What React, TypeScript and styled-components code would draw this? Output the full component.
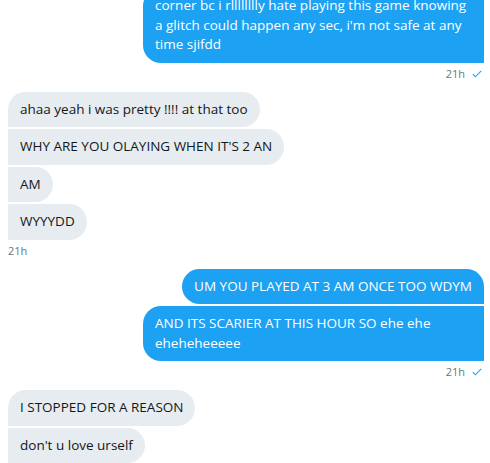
import React from "react";
import styled, { createGlobalStyle } from "styled-components";

const GlobalStyle = createGlobalStyle`
  html, body { margin: 0; padding: 0; background: #ffffff; }
  body { font-family: "Open Sans", "Noto Sans", sans-serif; }
`;

type Side = "in" | "out";
type Pos = "first" | "middle" | "last" | "tail";

const Pane = styled.main`
  height: 100vh;
  box-sizing: border-box;
  overflow: hidden;
  display: flex;
  flex-direction: column;
  justify-content: flex-end;
  padding: 0 6px 0 8px;
`;

const Group = styled.section<{ $side: Side }>`
  display: flex;
  flex-direction: column;
  align-items: ${(p) => (p.$side === "out" ? "flex-end" : "flex-start")};
  gap: 2px;
  margin-bottom: 11px;
  &:last-child { margin-bottom: 0; }
`;

const R = 18;

function radius(side: Side, pos: Pos) {
  // order: tl tr br bl
  if (side === "in") {
    const tl = pos === "first" ? R : 0;
    return `${tl}px ${R}px ${R}px 0`;
  }
  const tr = pos === "first" ? R : 0;
  return `${R}px ${tr}px 0 ${R}px`;
}

const Bubble = styled.div<{ $side: Side; $pos: Pos }>`
  box-sizing: border-box;
  max-width: 341px;
  padding: 8px 12px;
  font-size: 13.5px;
  line-height: 19.5px;
  color: ${(p) => (p.$side === "out" ? "#ffffff" : "#14171a")};
  background: ${(p) => (p.$side === "out" ? "#1da1f2" : "#e6ecf0")};
  border-radius: ${(p) => radius(p.$side, p.$pos)};
  overflow-wrap: break-word;
`;

const Meta = styled.div<{ $side: Side }>`
  display: flex;
  align-items: center;
  gap: 7px;
  margin-top: 2px;
  height: 14px;
  font-size: 11px;
  line-height: 14px;
  color: #657786;
  padding-right: ${(p) => (p.$side === "out" ? "2px" : "0")};
`;

const Check = () => (
  <svg width="10" height="8" viewBox="0 0 10 8" aria-hidden="true">
    <polyline points="0.8,4.2 3.4,6.8 9.2,0.8" fill="none" stroke="#1da1f2" strokeWidth="1.1" />
  </svg>
);

type Msg = { text: string; pos: Pos };
const groups: { side: Side; msgs: Msg[] }[] = [
  {
    side: "out",
    msgs: [
      {
        text:
          "corner bc i rlllllllly hate playing this game knowing a glitch could happen any sec, i'm not safe at any time sjifdd",
        pos: "tail",
      },
    ],
  },
  {
    side: "in",
    msgs: [
      { text: "ahaa yeah i was pretty !!!! at that too", pos: "first" },
      { text: "WHY ARE YOU OLAYING WHEN IT'S 2 AN", pos: "middle" },
      { text: "AM", pos: "middle" },
      { text: "WYYYDD", pos: "last" },
    ],
  },
  {
    side: "out",
    msgs: [
      { text: "UM YOU PLAYED AT 3 AM ONCE TOO WDYM", pos: "first" },
      { text: "AND ITS SCARIER AT THIS HOUR SO ehe ehe eheheheeeee", pos: "last" },
    ],
  },
  {
    side: "in",
    msgs: [
      { text: "I STOPPED FOR A REASON", pos: "first" },
      { text: "don't u love urself", pos: "last" },
    ],
  },
];

export default function App() {
  return (
    <>
      <GlobalStyle />
      <Pane>
        {groups.map((g, gi) => (
          <Group key={gi} $side={g.side}>
            {g.msgs.map((m, mi) => (
              <Bubble key={mi} $side={g.side} $pos={m.pos}>
                {m.text}
              </Bubble>
            ))}
            {gi < groups.length - 1 && (
              <Meta $side={g.side}>
                <span>21h</span>
                {g.side === "out" && <Check />}
              </Meta>
            )}
          </Group>
        ))}
      </Pane>
    </>
  );
}
